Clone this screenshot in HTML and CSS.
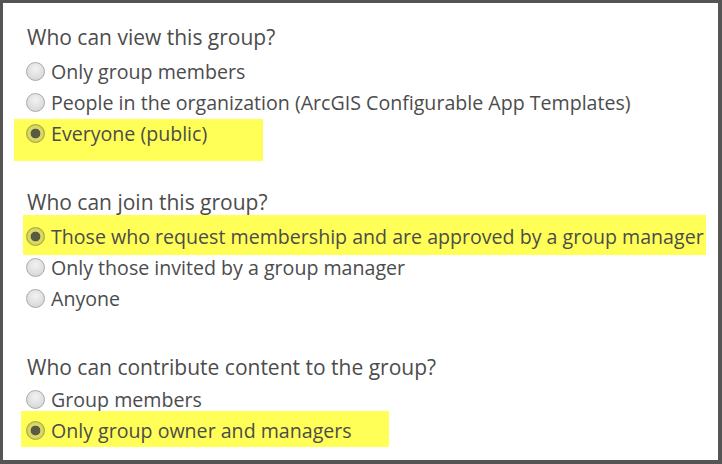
FILE: index.html
```html
<!DOCTYPE html>
<html>
<head>
<meta charset="utf-8">
<link rel="stylesheet" href="styles.css">
</head>
<body>
<div class="frame">
  <section class="group">
    <h2 class="q">Who can view this group?</h2>
    <div class="opt"><span class="radio"></span><span>Only group members</span></div>
    <div class="opt"><span class="radio"></span><span>People in the organization (ArcGIS Configurable App Templates)</span></div>
    <div class="opt hl hl-a"><span class="radio on"></span><span>Everyone (public)</span></div>
  </section>
  <section class="group">
    <h2 class="q">Who can join this group?</h2>
    <div class="opt hl hl-b"><span class="radio on"></span><span>Those who request membership and are approved by a group manager</span></div>
    <div class="opt"><span class="radio"></span><span>Only those invited by a group manager</span></div>
    <div class="opt"><span class="radio"></span><span>Anyone</span></div>
  </section>
  <section class="group">
    <h2 class="q q-tight">Who can contribute content to the group?</h2>
    <div class="opt"><span class="radio"></span><span>Group members</span></div>
    <div class="opt hl hl-c"><span class="radio on"></span><span>Only group owner and managers</span></div>
  </section>
</div>
</body>
</html>
```
FILE: styles.css
```css
html, body { margin: 0; padding: 0; background: #fff; }
.frame {
  box-sizing: border-box;
  width: 722px;
  height: 464px;
  border-style: solid;
  border-color: #555;
  border-width: 3px 4px 4px 3px;
  padding: 22px 0 0 24px;
  font-family: "Open Sans", sans-serif;
  color: #4c4c4c;
  overflow: hidden;
}
.group { margin-bottom: 41px; }
.q {
  margin: 0 0 7px 0;
  font-weight: normal;
  font-size: 21px;
  line-height: 24px;
}
.q-tight { margin-bottom: 5px; }
.opt {
  display: flex;
  align-items: center;
  height: 31px;
  font-size: 19.6px;
  gap: 6px;
}
.radio {
  width: 19px;
  height: 19px;
  margin-left: -1px;
  border-radius: 50%;
  box-sizing: border-box;
  border: 1px solid #a9a9a9;
  background: radial-gradient(circle at 50% 35%, #f2f2f2 0%, #e0e0e0 55%, #cfcfcf 100%);
  flex: none;
}
.radio.on {
  border-color: #a6a640;
  background: radial-gradient(circle, #5a5a42 0 4.6px, #d9d968 5.2px 7px, #cccc55 8px);
}
.hl { position: relative; z-index: 0; }
.hl::before {
  content: "";
  position: absolute;
  z-index: -1;
  background: #ffff57;
}
.hl-a::before { top: 1px; bottom: -12px; left: -13px; width: 249px; }
.hl-b::before { top: -6px; bottom: -3px; left: -4px; width: 683px; }
.hl-c::before { top: -4px; bottom: -1px; left: -6px; width: 368px; }
```
